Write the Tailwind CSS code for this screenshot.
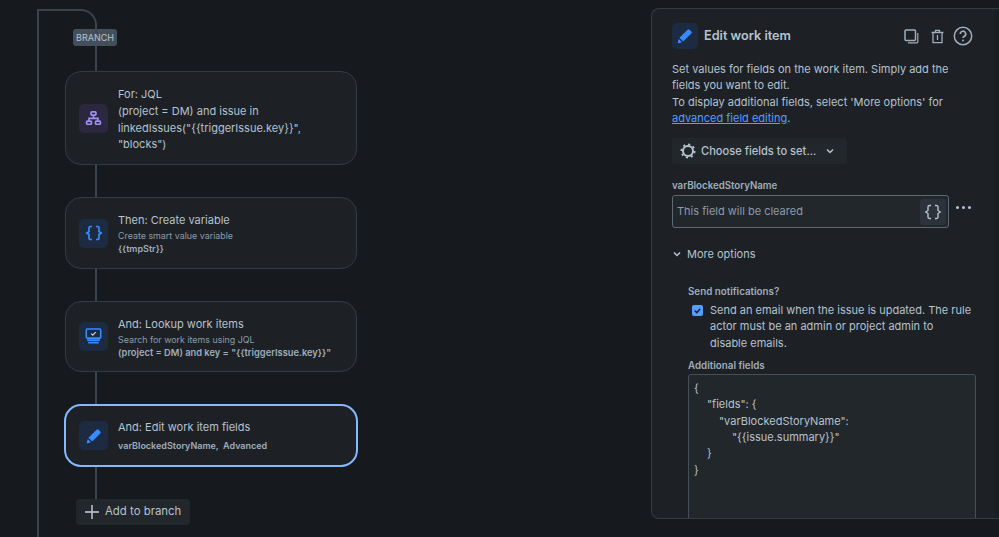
<!DOCTYPE html>
<html lang="en">
<head>
    <meta charset="UTF-8">
    <title>Edit work item</title>
    <script src="https://cdn.jsdelivr.net/npm/@tailwindcss/browser@4"></script>
</head>
<body class="bg-[#16191d] w-[999px] h-[537px] overflow-hidden font-['Inter',sans-serif] text-[#b6c2cf] flex relative">

    <!-- rule canvas -->
    <div class="w-[651px] shrink-0 relative">
        <!-- outer line and branch curve -->
        <div class="absolute left-[37px] top-[9px] bottom-0 w-[2px] bg-[#3b444c]"></div>
        <div class="absolute left-[37px] top-[9px] w-[60px] h-[24px] border-t-2 border-r-2 border-[#3b444c] rounded-tr-[16px]"></div>

        <div class="pl-[65px] pt-[29px] w-[358px] flex flex-col items-start">
            <div class="ml-[8px] h-[17px] w-[44px] rounded-[3px] bg-[#454f59] text-[#b6c2cf] text-[9px] leading-[17px] text-center">BRANCH</div>
            <div class="ml-[30px] w-[2px] h-[25px] bg-[#3b444c]"></div>

            <div class="w-[292px] h-[94px] rounded-[16px] border border-[#343b42] bg-[#1d2125] flex items-center pl-[13px] pr-3">
                <div class="w-[29px] h-[29px] rounded-[5px] bg-[#2b273f] flex items-center justify-center shrink-0">
                    <svg class="w-[17px] h-[17px]" viewBox="0 0 16 16" fill="none" stroke="#9f8fef" stroke-width="1.600"><rect x="5.700" y="1.800" width="4.600" height="3" rx=".8"/><rect x="1.500" y="10.400" width="4.600" height="3" rx=".8"/><rect x="9.900" y="10.400" width="4.600" height="3" rx=".8"/><path d="M8 4.800v3M3.800 10.400V7.800h8.400v2.600"/></svg>
                </div>
                <div class="ml-[10px] pt-[2px] text-[11px] leading-[16.2px] text-[#b6c2cf]">
                    <div class="mb-[1px]">For: JQL</div>
                    <div>(project = DM) and issue in<br>linkedIssues("{{triggerIssue.key}}",<br>"blocks")</div>
                </div>
            </div>
            <div class="ml-[30px] w-[2px] h-[32px] bg-[#3b444c]"></div>

            <div class="w-[292px] h-[72px] rounded-[16px] border border-[#343b42] bg-[#1d2125] flex items-center pl-[13px] pr-3">
                <div class="w-[29px] h-[29px] rounded-[5px] bg-[#1c2b41] flex items-center justify-center shrink-0">
                    <svg class="w-[18px] h-[18px]" viewBox="0 0 18 18" fill="none" stroke="#388bff" stroke-width="1.700"><path d="M7 2.500H5.500A1.500 1.500 0 0 0 4 4V7.500L1.800 9 4 10.500V14a1.500 1.500 0 0 0 1.500 1.500H7M11 2.500h1.500A1.500 1.500 0 0 1 14 4V7.500L16.200 9 14 10.500V14a1.500 1.500 0 0 1-1.500 1.500H11"/></svg>
                </div>
                <div class="ml-[10px]">
                    <div class="text-[11px] leading-[16px] mt-[1px] mb-[1px]">Then: Create variable</div>
                    <div class="text-[8.9px] leading-[13px] text-[#8c9bab]">Create smart value variable</div>
                    <div class="text-[9px] leading-[13px] font-semibold text-[#9fadbc]">{{tmpStr}}</div>
                </div>
            </div>
            <div class="ml-[30px] w-[2px] h-[32px] bg-[#3b444c]"></div>

            <div class="w-[292px] h-[71px] rounded-[16px] border border-[#343b42] bg-[#1d2125] flex items-center pl-[13px] pr-3">
                <div class="w-[29px] h-[29px] rounded-[5px] bg-[#1c2b41] flex items-center justify-center shrink-0">
                    <svg class="w-[17px] h-[17px]" viewBox="0 0 16 16" fill="none" stroke="#388bff"><rect x="1.200" y="1" width="13.600" height="8.500" rx="1" stroke-width="1.500"/><path d="M5.800 5.300l1.500 1.400 2.800-2.800" stroke="#c7d1db" stroke-width="1.200"/><path d="M2 11.400h12M3 13.800h10" stroke-width="1.600"/></svg>
                </div>
                <div class="ml-[10px]">
                    <div class="text-[11px] leading-[16px] mt-[1px] mb-[1px]">And: Lookup work items</div>
                    <div class="text-[8.9px] leading-[13px] text-[#8c9bab]">Search for work items using JQL</div>
                    <div class="text-[9.3px] leading-[13px] font-semibold text-[#9fadbc] whitespace-nowrap">(project = DM) and key = "{{triggerIssue.key}}"</div>
                </div>
            </div>
            <div class="ml-[30px] w-[2px] h-[32px] bg-[#3b444c]"></div>

            <div class="-ml-[1px] w-[294px] h-[63px] rounded-[17px] border-2 border-[#85b8ff] bg-[#1d2125] flex items-center pl-[13px] pr-3">
                <div class="w-[29px] h-[29px] rounded-[5px] bg-[#1c2b41] flex items-center justify-center shrink-0">
                    <svg class="w-[16px] h-[16px]" viewBox="0 0 16 16" fill="#388bff"><path d="M10.600 1.700a1.400 1.400 0 0 1 2 0l1.700 1.700a1.400 1.400 0 0 1 0 2L6.200 13.500 2.500 9.800zM1.800 11l3.200 3.200-3.300 1a.7.7 0 0 1-.9-.9z"/></svg>
                </div>
                <div class="ml-[10px]">
                    <div class="text-[11px] leading-[16px] mb-[4px]">And: Edit work item fields</div>
                    <div class="text-[9px] leading-[13px] font-semibold text-[#9fadbc]">varBlockedStoryName, &nbsp;Advanced</div>
                </div>
            </div>
            <div class="ml-[30px] w-[2px] h-[32px] bg-[#3b444c]"></div>

            <button class="ml-[11px] h-[26px] w-[114px] rounded-[3px] bg-[#22272b] flex items-center pl-[8px] text-[11.4px] text-[#b6c2cf]">
                <svg class="w-[16px] h-[16px] mr-[5px]" viewBox="0 0 16 16" stroke="#c7d1db" stroke-width="1.400"><path d="M8 1v14M1 8h14"/></svg>
                Add to branch
            </button>
        </div>
    </div>

    <!-- edit panel -->
    <div class="mt-[8px] h-[511px] flex-1 rounded-l-[8px] border border-r-0 border-[#343b42] bg-[#1d2125] overflow-hidden pl-[20px] pr-[23px] pt-[14px] relative">
        <div class="absolute right-0 top-0 bottom-0 w-[4px] bg-[#1a1d21]"></div>
        <div class="flex items-center h-[26px]">
            <div class="w-[26px] h-[26px] rounded-[5px] bg-[#1c2b41] flex items-center justify-center">
                <svg class="w-[16px] h-[16px]" viewBox="0 0 16 16" fill="#388bff"><path d="M10.600 1.700a1.400 1.400 0 0 1 2 0l1.700 1.700a1.400 1.400 0 0 1 0 2L6.200 13.500 2.500 9.800zM1.800 11l3.200 3.200-3.300 1a.7.7 0 0 1-.9-.9z"/></svg>
            </div>
            <div class="ml-[6px] text-[12.7px] font-semibold text-[#b6c2cf]">Edit work item</div>
            <div class="ml-auto mr-[3px] flex items-center">
                <svg class="w-[15px] h-[15px]" viewBox="0 0 15 15" fill="none" stroke="#9fadbc"><rect x="1" y="1" width="10.500" height="10.500" rx="1" stroke-width="1.500"/><path d="M13.800 4v9a.8.8 0 0 1-.8.800H4" stroke-width="1.200"/></svg>
                <svg class="w-[15px] h-[15px] ml-[11px] mr-[8px]" viewBox="0 0 15 15" fill="none" stroke="#9fadbc" stroke-width="1.300"><path d="M1.500 3.500h12M5.500 3.500V1.300h4v2.200M3 3.500v10.200h9V3.500M7.500 6v5"/></svg>
                <svg class="w-[20px] h-[20px]" viewBox="0 0 20 20" fill="none" stroke="#9fadbc" stroke-width="1.500"><circle cx="10" cy="10" r="8.700"/><path d="M7.300 8a2.700 2.700 0 1 1 3.800 2.400c-.8.400-1.100.9-1.100 1.700" stroke-width="1.700"/><circle cx="10" cy="14.600" r="1" fill="#9fadbc" stroke="none"/></svg>
            </div>
        </div>

        <p class="mt-[12px] max-w-[290px] text-[11px] leading-[16.3px] text-[#b6c2cf]">Set values for fields on the work item. Simply add the fields you want to edit.<br>To display additional fields, select 'More options' for <a class="text-[#579dff] underline">advanced field editing</a>.</p>

        <button class="mt-[12px] h-[26px] w-[175px] rounded-[3px] bg-[#22272b] flex items-center pl-[8px] text-[11.1px] font-medium text-[#b6c2cf]">
            <svg class="w-[16px] h-[16px] mr-[5px]" viewBox="0 0 16 16" fill="none"><circle cx="8" cy="8" r="5" stroke="#b6c2cf" stroke-width="2"/><circle cx="8" cy="8" r="6.600" stroke="#b6c2cf" stroke-width="1.800" stroke-dasharray="2.200 2.950"/></svg>
            Choose fields to set...
            <svg class="w-[10px] h-[10px] ml-[9px]" viewBox="0 0 10 10" fill="none" stroke="#b6c2cf" stroke-width="1.500"><path d="M2 3.500l3 3 3-3"/></svg>
        </button>

        <div class="mt-[15px] text-[9.7px] leading-[13px] font-semibold text-[#9fadbc]">varBlockedStoryName</div>
        <div class="mt-[3px] flex items-start">
            <div class="w-[277px] h-[33px] rounded-[3px] border border-[#5d6975] bg-[#22272b] flex items-center pl-[4px] pr-[2px] text-[11px] text-[#8c9bab]">
                This field will be cleared
                <div class="ml-auto w-[26px] h-[26px] rounded-[3px] bg-[#2c333a] flex items-center justify-center">
                    <svg class="w-[18px] h-[18px]" viewBox="0 0 18 18" fill="none" stroke="#b6c2cf" stroke-width="1.400"><path d="M7 2.500H5.500A1.500 1.500 0 0 0 4 4V7.500L1.800 9 4 10.500V14a1.500 1.500 0 0 0 1.500 1.500H7M11 2.500h1.500A1.500 1.500 0 0 1 14 4V7.500L16.200 9 14 10.500V14a1.500 1.500 0 0 1-1.500 1.500H11"/></svg>
                </div>
            </div>
            <div class="ml-[7px] mt-[11px] flex gap-[3px]">
                <span class="w-[3px] h-[3px] rounded-full bg-[#b6c2cf]"></span><span class="w-[3px] h-[3px] rounded-full bg-[#b6c2cf]"></span><span class="w-[3px] h-[3px] rounded-full bg-[#b6c2cf]"></span>
            </div>
        </div>

        <div class="mt-[18px] flex items-center text-[11px] leading-[16px] text-[#b6c2cf]">
            <svg class="w-[10px] h-[10px] mr-[5px]" viewBox="0 0 10 10" fill="none" stroke="#b6c2cf" stroke-width="1.500"><path d="M2 3.500l3 3 3-3"/></svg>
            More options
        </div>

        <div class="ml-[16px] mt-[23px]">
            <div class="text-[9.8px] leading-[13px] font-semibold text-[#9fadbc]">Send notifications?</div>
            <div class="mt-[4px] flex pl-[4px]">
                <div class="w-[11px] h-[11px] mt-[3px] rounded-[2px] bg-[#579dff] flex items-center justify-center shrink-0">
                    <svg class="w-[9px] h-[9px]" viewBox="0 0 10 10" fill="none" stroke="#1d2125" stroke-width="1.800"><path d="M2 5.200l2.200 2.200L8 3"/></svg>
                </div>
                <p class="ml-[7px] w-[262px] text-[11px] leading-[16.3px] text-[#b6c2cf]">Send an email when the issue is updated. The rule actor must be an admin or project admin to disable emails.</p>
            </div>
            <div class="mt-[8px] text-[9.8px] leading-[13px] font-semibold text-[#9fadbc]">Additional fields</div>
            <div class="mt-[2px] w-[288px] h-[200px] rounded-[3px] border border-[#454f59] bg-[#22272b] pl-[5px] pt-[5px] text-[11px] leading-[16.3px] text-[#b6c2cf]">
                <div>{</div>
                <div class="pl-[13px]">"fields": {</div>
                <div class="pl-[25px]">"varBlockedStoryName":</div>
                <div class="pl-[38px]">"{{issue.summary}}"</div>
                <div class="pl-[13px]">}</div>
                <div>}</div>
            </div>
        </div>
    </div>
</body>
</html>
